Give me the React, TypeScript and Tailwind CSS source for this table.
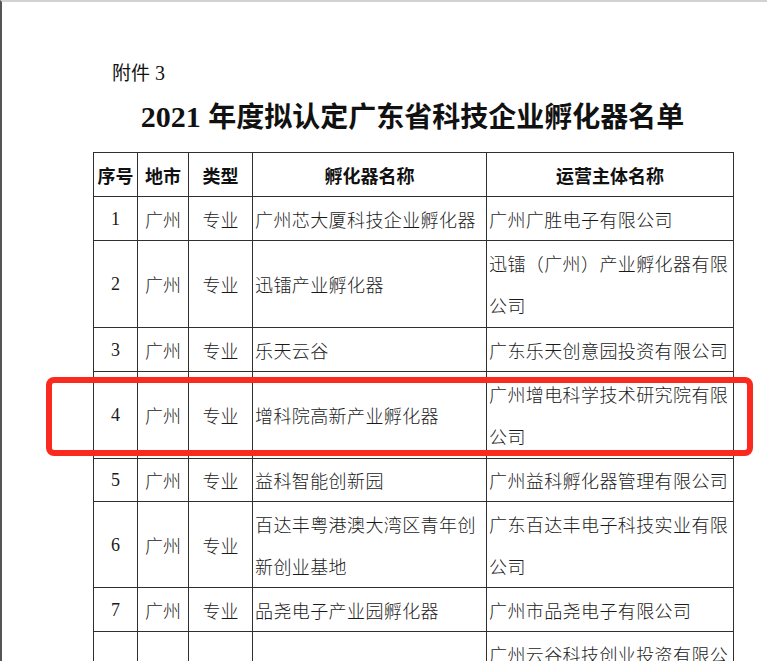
import React from "react";

type Row = { n: string; city: string; type: string; name: string[]; op: string[]; h: string };

const rows: Row[] = [
  { n: "1", city: "广州", type: "专业", name: ["广州芯大厦科技企业孵化器"], op: ["广州广胜电子有限公司"], h: "h-[44px]" },
  { n: "2", city: "广州", type: "专业", name: ["迅镭产业孵化器"], op: ["迅镭（广州）产业孵化器有限", "公司"], h: "h-[87px]" },
  { n: "3", city: "广州", type: "专业", name: ["乐天云谷"], op: ["广东乐天创意园投资有限公司"], h: "h-[44px]" },
  { n: "4", city: "广州", type: "专业", name: ["增科院高新产业孵化器"], op: ["广州增电科学技术研究院有限", "公司"], h: "h-[87px]" },
  { n: "5", city: "广州", type: "专业", name: ["益科智能创新园"], op: ["广州益科孵化器管理有限公司"], h: "h-[43px]" },
  { n: "6", city: "广州", type: "专业", name: ["百达丰粤港澳大湾区青年创", "新创业基地"], op: ["广东百达丰电子科技实业有限", "公司"], h: "h-[86px]" },
  { n: "7", city: "广州", type: "专业", name: ["品尧电子产业园孵化器"], op: ["广州市品尧电子有限公司"], h: "h-[44px]" },
  { n: "", city: "", type: "", name: [""], op: ["广州云谷科技创业投资有限公", "司"], h: "h-[87px]" },
];

const cjk = "font-['Noto_Sans_CJK_SC',sans-serif]";

export default function App() {
  return (
    <div className="relative h-[661px] w-[767px] overflow-hidden bg-white border-l-2 border-t-2 border-l-[#555555] border-t-[#d2d2d2]">
      <div className={`ml-[110px] mt-[58px] h-[24px] leading-[24px] text-[19px] text-[#111] ${cjk}`}>
        附件<span className="font-['Liberation_Serif',serif] text-[20px]"> 3</span>
      </div>
      <div className="ml-[91px] mt-[12px] h-[38px] w-[639px] whitespace-nowrap text-center leading-[38px] text-[#111]">
        <span className="font-['Liberation_Serif',serif] font-bold text-[30px]">2021 </span>
        <span className={`${cjk} font-bold text-[28px]`}>年度拟认定广东省科技企业孵化器名单</span>
      </div>
      <table className="ml-[91px] mt-[18px] w-[640px] table-fixed border-collapse text-[#1a1a1a]">
        <colgroup>
          <col className="w-[44px]" />
          <col className="w-[51px]" />
          <col className="w-[64px]" />
          <col className="w-[234px]" />
          <col className="w-[247px]" />
        </colgroup>
        <thead>
          <tr className={`${cjk} font-bold text-[18px] text-[#111]`}>
            {["序号", "地市", "类型", "孵化器名称", "运营主体名称"].map((t) => (
              <th key={t} className="h-[44px] border border-[#2f2f2f] p-0 text-center align-middle leading-[42px] whitespace-nowrap">
                {t}
              </th>
            ))}
          </tr>
        </thead>
        <tbody>
          {rows.map((r, i) => (
            <tr key={i}>
              <td className={`${r.h} border border-[#2f2f2f] p-0 text-center align-middle font-['Liberation_Serif',serif] text-[18px] leading-[42px]`}>
                {r.n}
              </td>
              <td className={`border border-[#2f2f2f] p-0 text-center align-middle ${cjk} font-light text-[18px] leading-[42px]`}>
                {r.city}
              </td>
              <td className={`border border-[#2f2f2f] p-0 text-center align-middle ${cjk} font-light text-[18px] leading-[42px]`}>
                {r.type}
              </td>
              <td className={`border border-[#2f2f2f] py-0 pl-[2px] pr-0 text-left align-middle ${cjk} font-light text-[18px] leading-[42px] tracking-[0.4px]`}>
                {r.name.map((l, j) => (
                  <div key={j} className="whitespace-nowrap">{l}</div>
                ))}
              </td>
              <td className={`border border-[#2f2f2f] py-0 pl-[2px] pr-0 text-left align-middle ${cjk} font-light text-[18px] leading-[42px] tracking-[0.4px]`}>
                {r.op.map((l, j) => (
                  <div key={j} className="whitespace-nowrap">{l}</div>
                ))}
              </td>
            </tr>
          ))}
        </tbody>
      </table>
      <div className="absolute left-[44px] top-[375px] h-[79px] w-[707px] rounded-[8px] border-[6px] border-[#fb2a1f]" />
    </div>
  );
}
